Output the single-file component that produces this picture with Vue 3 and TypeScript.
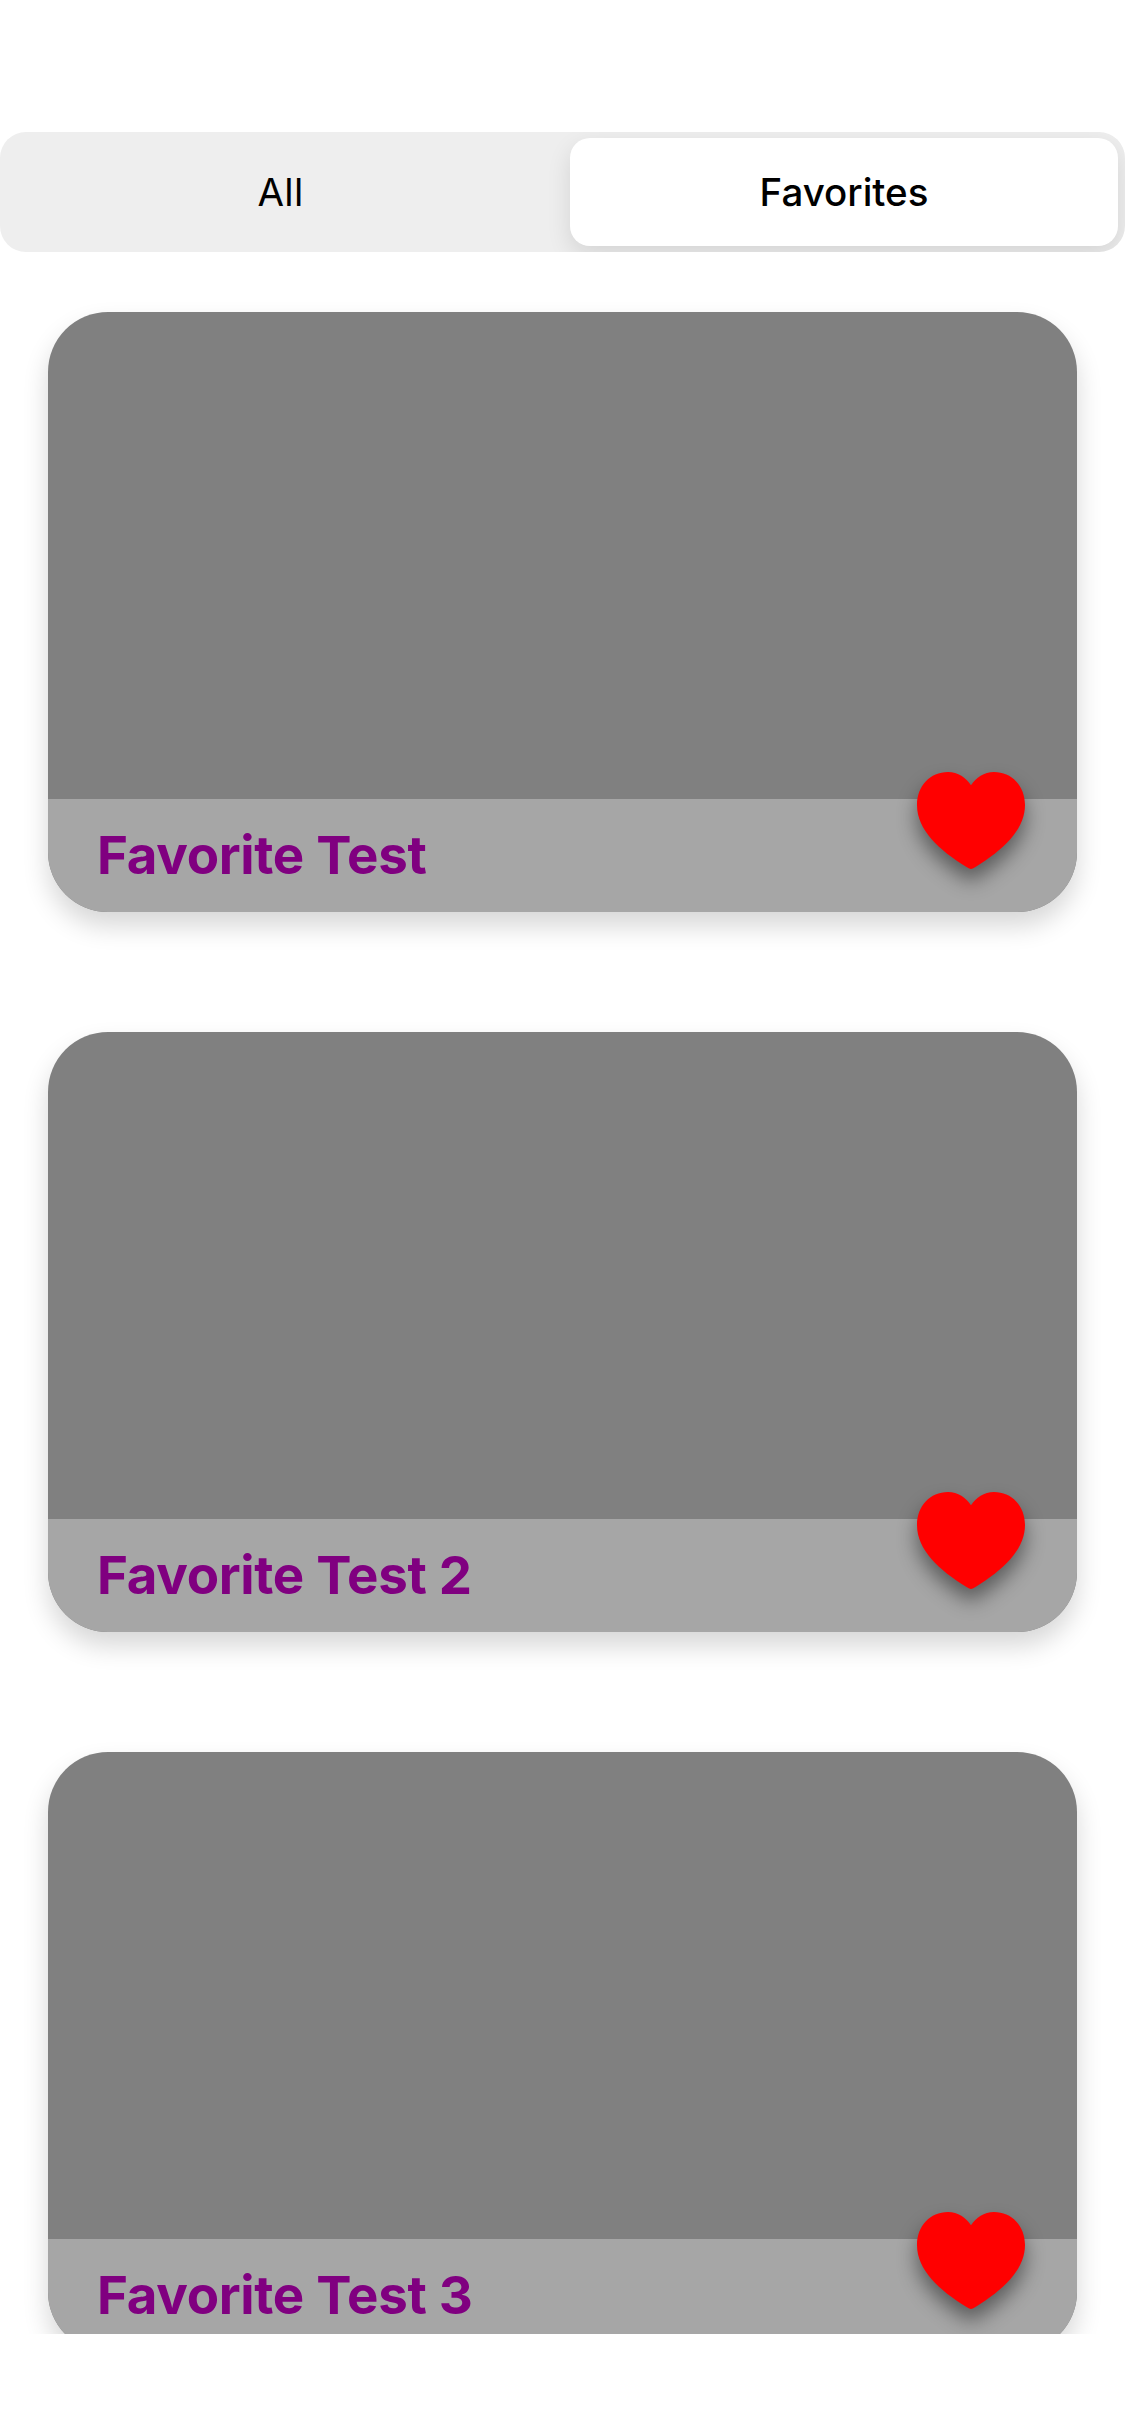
<script setup lang="ts">
import { ref } from 'vue'

interface Place {
  id: number
  title: string
}

const tabs: string[] = ['All', 'Favorites']
const active = ref<string>('Favorites')

const places: Place[] = [
  { id: 1, title: 'Favorite Test' },
  { id: 2, title: 'Favorite Test 2' },
  { id: 3, title: 'Favorite Test 3' },
]
</script>

<template>
  <main class="screen">
    <nav class="segments">
      <button
        v-for="tab in tabs"
        :key="tab"
        class="segment"
        :class="{ selected: tab === active }"
        @click="active = tab"
      >
        <span>{{ tab }}</span>
      </button>
    </nav>
    <section class="list">
      <article v-for="place in places" :key="place.id" class="card">
        <footer class="caption">
          <h2 class="title">{{ place.title }}</h2>
        </footer>
        <svg class="heart" viewBox="0 0 108 97" width="108" height="97">
          <path
            fill="#ff0000"
            d="M54 13.3C49 5.5 41 0 31 0C13 0 0 14 0 33C0 58 22 78 49.5 95C51.5 96.3 53 97 54 97C55 97 56.5 96.3 58.5 95C86 78 108 58 108 33C108 14 95 0 77 0C67 0 59 5.5 54 13.3Z"
          />
        </svg>
      </article>
    </section>
  </main>
</template>

<style>
body {
  background: #fff;
}
</style>

<style scoped>
.screen {
  box-sizing: border-box;
  display: flex;
  flex-direction: column;
  width: 1125px;
  height: 2436px;
  padding: 132px 0 102px;
  overflow: hidden;
  background: #fff;
  font-family: Inter, 'Liberation Sans', sans-serif;
}

.segments {
  box-sizing: border-box;
  display: flex;
  flex: none;
  gap: 15px;
  height: 120px;
  padding: 6px 7px 6px 6px;
  border-radius: 26px;
  overflow: hidden;
  background: #eeeeee;
}

.segment {
  flex: 1 1 0;
  padding: 0;
  border: 0;
  border-radius: 20px;
  background: transparent;
  color: #000;
  font: 400 38.5px/108px Inter, 'Liberation Sans', sans-serif;
  letter-spacing: 0.3px;
}

.segment.selected {
  flex: 0 0 548px;
  background: #fff;
  font-weight: 500;
  letter-spacing: 0;
  box-shadow: 0 9px 24px rgba(0, 0, 0, 0.11);
}

.list {
  display: flex;
  flex: 1;
  flex-direction: column;
  gap: 120px;
  min-height: 0;
  padding: 60px 48px 0;
  overflow: hidden;
}

.card {
  position: relative;
  display: flex;
  flex: none;
  flex-direction: column;
  justify-content: flex-end;
  height: 600px;
  border-radius: 60px;
  background: #808080;
  box-shadow: 0 14px 26px rgba(0, 0, 0, 0.16);
}

.caption {
  box-sizing: border-box;
  display: flex;
  align-items: center;
  height: 113px;
  padding: 0 0 1px 49px;
  border-radius: 0 0 60px 60px;
  background: #a6a6a6;
}

.title {
  margin: 0;
  color: #800080;
  font-size: 52.8px;
  font-weight: 700;
  line-height: 64px;
  letter-spacing: -0.3px;
  white-space: nowrap;
}

.heart {
  position: absolute;
  right: 52px;
  bottom: 43px;
  overflow: visible;
  filter: drop-shadow(0 12px 10px rgba(0, 0, 0, 0.45));
}
</style>
